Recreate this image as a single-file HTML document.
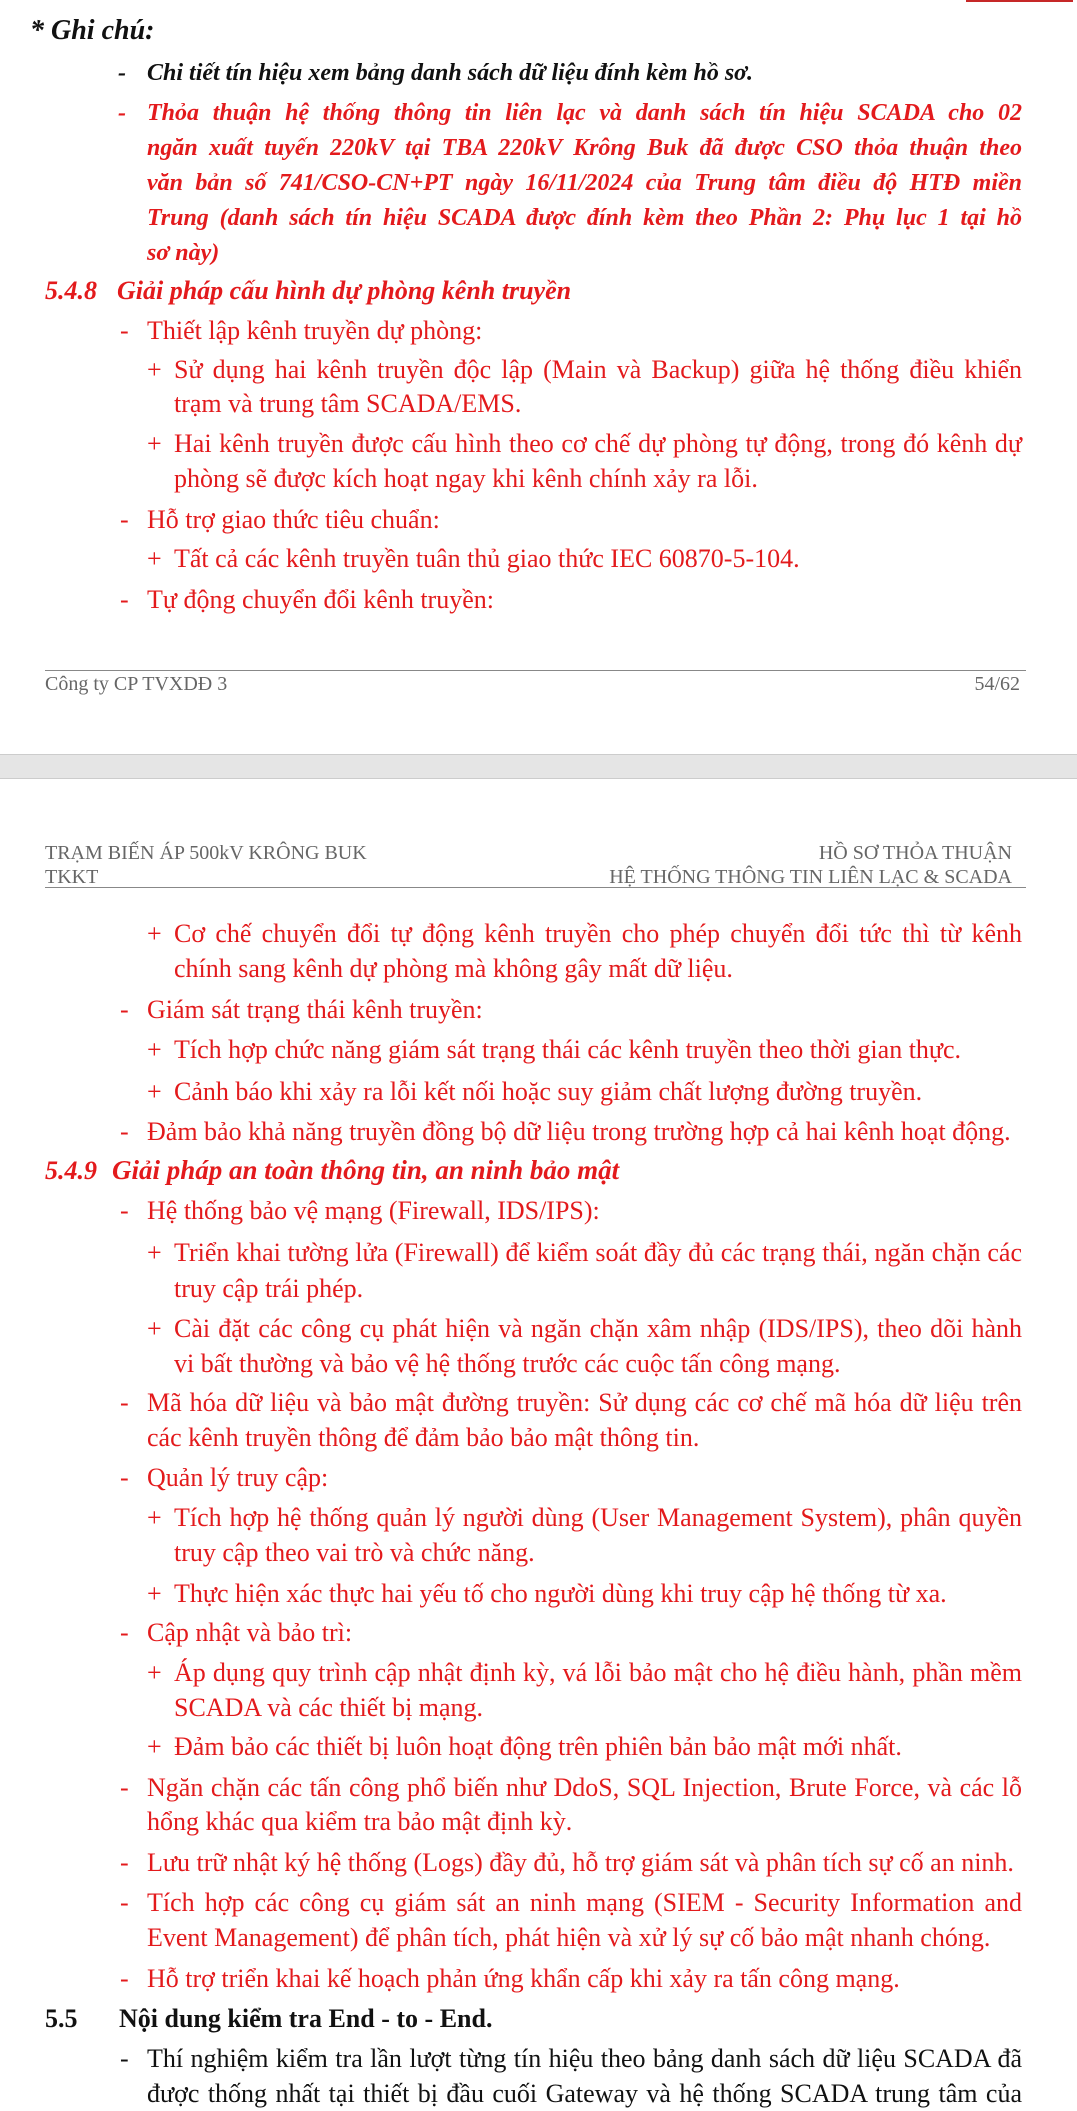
<!DOCTYPE html>
<html><head><meta charset="utf-8">
<style>
html,body{margin:0;padding:0;background:#fff;}
body{width:1077px;height:2111px;position:relative;overflow:hidden;font-family:"Liberation Serif","DejaVu Serif",serif;font-size:26px;}
.l{position:absolute;white-space:nowrap;line-height:34px;height:34px;}
.r{color:#e31a1c;}
.k{color:#111;}
.i{font-style:italic;font-weight:bold;font-size:24px;}
.b{font-weight:bold;font-size:26px;}
.j{text-align:justify;text-align-last:justify;width:848px;white-space:normal;}
.j2{text-align:justify;text-align-last:justify;white-space:normal;width:875px;}
.g{color:#666;font-size:20px;line-height:22px;height:22px;}
</style></head><body>
<div style="position:absolute;left:966px;top:0;width:107px;height:2px;background:#c62828"></div>

<div class="l k i" style="left:30px;top:14px;font-size:28px">* Ghi chú:</div>
<div class="l k i" style="left:118px;top:56px">-</div><div class="l k i" style="left:147px;top:56px">Chi tiết tín hiệu xem bảng danh sách dữ liệu đính kèm hồ sơ.</div>
<div class="l r i" style="left:118px;top:96px">-</div>
<div class="l r i j2" style="left:147px;top:96px">Thỏa thuận hệ thống thông tin liên lạc và danh sách tín hiệu SCADA cho 02</div>
<div class="l r i j2" style="left:147px;top:131px">ngăn xuất tuyến 220kV tại TBA 220kV Krông Buk đã được CSO thỏa thuận theo</div>
<div class="l r i j2" style="left:147px;top:166px">văn bản số 741/CSO-CN+PT ngày 16/11/2024 của Trung tâm điều độ HTĐ miền</div>
<div class="l r i j2" style="left:147px;top:201px">Trung (danh sách tín hiệu SCADA được đính kèm theo Phần 2: Phụ lục 1 tại hồ</div>
<div class="l r i" style="left:147px;top:236px">sơ này)</div>

<div class="l r i b" style="left:45px;top:274px">5.4.8</div><div class="l r i b" style="left:117px;top:274px">Giải pháp cấu hình dự phòng kênh truyền</div>
<div class="l r" style="left:120px;top:314px">-</div><div class="l r" style="left:147px;top:314px">Thiết lập kênh truyền dự phòng:</div>
<div class="l r" style="left:147px;top:353px">+</div>
<div class="l r j" style="left:174px;top:353px">Sử dụng hai kênh truyền độc lập (Main và Backup) giữa hệ thống điều khiển</div>
<div class="l r" style="left:174px;top:387px">trạm và trung tâm SCADA/EMS.</div>
<div class="l r" style="left:147px;top:427px">+</div>
<div class="l r j" style="left:174px;top:427px">Hai kênh truyền được cấu hình theo cơ chế dự phòng tự động, trong đó kênh dự</div>
<div class="l r" style="left:174px;top:462px">phòng sẽ được kích hoạt ngay khi kênh chính xảy ra lỗi.</div>
<div class="l r" style="left:120px;top:503px">-</div><div class="l r" style="left:147px;top:503px">Hỗ trợ giao thức tiêu chuẩn:</div>
<div class="l r" style="left:147px;top:542px">+</div><div class="l r" style="left:174px;top:542px">Tất cả các kênh truyền tuân thủ giao thức IEC 60870-5-104.</div>
<div class="l r" style="left:120px;top:583px">-</div><div class="l r" style="left:147px;top:583px">Tự động chuyển đổi kênh truyền:</div>

<div style="position:absolute;left:45px;top:670px;width:981px;height:1px;background:#888"></div>
<div class="l g" style="left:45px;top:673px">Công ty CP TVXDĐ 3</div>
<div class="l g" style="left:940px;top:673px;width:80px;text-align:right">54/62</div>

<div style="position:absolute;left:0;top:754px;width:1077px;height:23px;background:#e5e5e5;border-top:1px solid #ccc;border-bottom:1px solid #ccc"></div>

<div class="l g" style="left:45px;top:842px">TRẠM BIẾN ÁP 500kV KRÔNG BUK</div>
<div class="l g" style="left:45px;top:866px">TKKT</div>
<div class="l g" style="left:600px;top:842px;width:412px;text-align:right">HỒ SƠ THỎA THUẬN</div>
<div class="l g" style="left:400px;top:866px;width:612px;text-align:right">HỆ THỐNG THÔNG TIN LIÊN LẠC &amp; SCADA</div>
<div style="position:absolute;left:45px;top:887px;width:981px;height:1px;background:#888"></div>

<div class="l r" style="left:147px;top:917px">+</div>
<div class="l r j" style="left:174px;top:917px">Cơ chế chuyển đổi tự động kênh truyền cho phép chuyển đổi tức thì từ kênh</div>
<div class="l r" style="left:174px;top:952px">chính sang kênh dự phòng mà không gây mất dữ liệu.</div>
<div class="l r" style="left:120px;top:993px">-</div><div class="l r" style="left:147px;top:993px">Giám sát trạng thái kênh truyền:</div>
<div class="l r" style="left:147px;top:1033px">+</div><div class="l r" style="left:174px;top:1033px">Tích hợp chức năng giám sát trạng thái các kênh truyền theo thời gian thực.</div>
<div class="l r" style="left:147px;top:1075px">+</div><div class="l r" style="left:174px;top:1075px">Cảnh báo khi xảy ra lỗi kết nối hoặc suy giảm chất lượng đường truyền.</div>
<div class="l r" style="left:120px;top:1115px">-</div><div class="l r" style="left:147px;top:1115px">Đảm bảo khả năng truyền đồng bộ dữ liệu trong trường hợp cả hai kênh hoạt động.</div>

<div class="l r i b" style="left:45px;top:1154px">5.4.9</div><div class="l r i b" style="left:112px;top:1153px;font-size:27px">Giải pháp an toàn thông tin, an ninh bảo mật</div>
<div class="l r" style="left:120px;top:1194px">-</div><div class="l r" style="left:147px;top:1194px">Hệ thống bảo vệ mạng (Firewall, IDS/IPS):</div>
<div class="l r" style="left:147px;top:1236px">+</div>
<div class="l r j" style="left:174px;top:1236px">Triển khai tường lửa (Firewall) để kiểm soát đầy đủ các trạng thái, ngăn chặn các</div>
<div class="l r" style="left:174px;top:1272px">truy cập trái phép.</div>
<div class="l r" style="left:147px;top:1312px">+</div>
<div class="l r j" style="left:174px;top:1312px">Cài đặt các công cụ phát hiện và ngăn chặn xâm nhập (IDS/IPS), theo dõi hành</div>
<div class="l r" style="left:174px;top:1347px">vi bất thường và bảo vệ hệ thống trước các cuộc tấn công mạng.</div>
<div class="l r" style="left:120px;top:1386px">-</div>
<div class="l r j2" style="left:147px;top:1386px">Mã hóa dữ liệu và bảo mật đường truyền: Sử dụng các cơ chế mã hóa dữ liệu trên</div>
<div class="l r" style="left:147px;top:1421px">các kênh truyền thông để đảm bảo bảo mật thông tin.</div>
<div class="l r" style="left:120px;top:1461px">-</div><div class="l r" style="left:147px;top:1461px">Quản lý truy cập:</div>
<div class="l r" style="left:147px;top:1501px">+</div>
<div class="l r j" style="left:174px;top:1501px">Tích hợp hệ thống quản lý người dùng (User Management System), phân quyền</div>
<div class="l r" style="left:174px;top:1536px">truy cập theo vai trò và chức năng.</div>
<div class="l r" style="left:147px;top:1577px">+</div><div class="l r" style="left:174px;top:1577px">Thực hiện xác thực hai yếu tố cho người dùng khi truy cập hệ thống từ xa.</div>
<div class="l r" style="left:120px;top:1616px">-</div><div class="l r" style="left:147px;top:1616px">Cập nhật và bảo trì:</div>
<div class="l r" style="left:147px;top:1656px">+</div>
<div class="l r j" style="left:174px;top:1656px">Áp dụng quy trình cập nhật định kỳ, vá lỗi bảo mật cho hệ điều hành, phần mềm</div>
<div class="l r" style="left:174px;top:1691px">SCADA và các thiết bị mạng.</div>
<div class="l r" style="left:147px;top:1730px">+</div><div class="l r" style="left:174px;top:1730px">Đảm bảo các thiết bị luôn hoạt động trên phiên bản bảo mật mới nhất.</div>
<div class="l r" style="left:120px;top:1771px">-</div>
<div class="l r j2" style="left:147px;top:1771px">Ngăn chặn các tấn công phổ biến như DdoS, SQL Injection, Brute Force, và các lỗ</div>
<div class="l r" style="left:147px;top:1805px">hổng khác qua kiểm tra bảo mật định kỳ.</div>
<div class="l r" style="left:120px;top:1846px">-</div><div class="l r" style="left:147px;top:1846px">Lưu trữ nhật ký hệ thống (Logs) đầy đủ, hỗ trợ giám sát và phân tích sự cố an ninh.</div>
<div class="l r" style="left:120px;top:1886px">-</div>
<div class="l r j2" style="left:147px;top:1886px">Tích hợp các công cụ giám sát an ninh mạng (SIEM - Security Information and</div>
<div class="l r" style="left:147px;top:1921px">Event Management) để phân tích, phát hiện và xử lý sự cố bảo mật nhanh chóng.</div>
<div class="l r" style="left:120px;top:1962px">-</div><div class="l r" style="left:147px;top:1962px">Hỗ trợ triển khai kế hoạch phản ứng khẩn cấp khi xảy ra tấn công mạng.</div>

<div class="l k b" style="left:45px;top:2002px">5.5</div><div class="l k b" style="left:119px;top:2002px">Nội dung kiểm tra End - to - End.</div>
<div class="l k" style="left:120px;top:2042px">-</div>
<div class="l k j2" style="left:147px;top:2042px">Thí nghiệm kiểm tra lần lượt từng tín hiệu theo bảng danh sách dữ liệu SCADA đã</div>
<div class="l k j2" style="left:147px;top:2077px">được thống nhất tại thiết bị đầu cuối Gateway và hệ thống SCADA trung tâm của</div>
</body></html>
